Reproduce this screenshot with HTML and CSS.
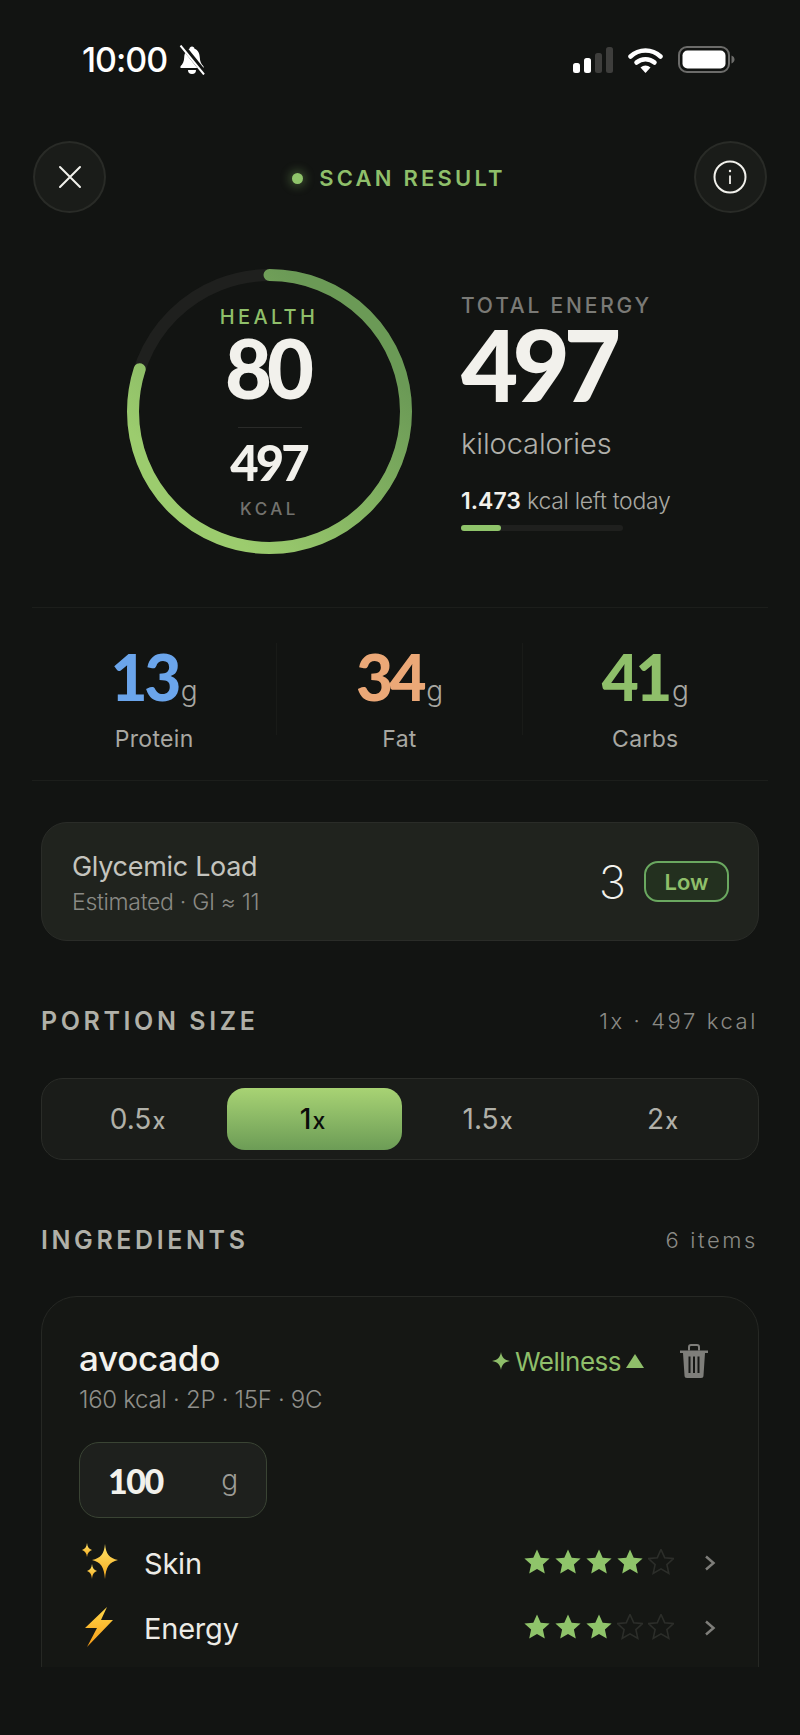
FILE: index.html
```html
<!DOCTYPE html>
<html lang="en">
<head>
    <meta charset="UTF-8">
    <meta name="viewport" content="width=device-width, initial-scale=1.0">
    <title>Scan result</title>
    <link rel="stylesheet" href="styles.css">
</head>
<body>
    <div class="page">
        <div class="status">
            <div class="status-left">
                <span class="time">10:00</span>
                <svg class="bell" width="30" height="30" viewBox="0 0 30 30">
                    <path d="M15 1.500c-1.500 0-2.300 1-2.500 2.200C9 4.800 7.400 8.400 7.200 12.500c-.2 4-1.300 6.500-3.700 8.700V23h23v-1.800c-2.400-2.200-3.500-4.700-3.700-8.700-.2-4.100-1.800-7.700-5.300-8.800C17.300 2.500 16.500 1.500 15 1.500z" fill="#fff"/>
                    <path d="M11 25a4 4 0 0 0 8 0z" fill="#fff"/>
                    <path d="M5 0 L28 28.500" stroke="#121412" stroke-width="5"/>
                    <path d="M3.500 .5 L27 29.500" stroke="#fff" stroke-width="2"/>
                </svg>
            </div>
            <div class="status-right">
                <svg width="40" height="26" viewBox="0 0 40 26">
                    <rect x="0" y="16" width="7" height="10" rx="2.500" fill="#fff"/>
                    <rect x="11" y="11" width="7" height="15" rx="2.500" fill="#fff"/>
                    <rect x="22" y="6" width="7" height="20" rx="2.500" fill="#3e3e3c"/>
                    <rect x="33" y="0" width="7" height="26" rx="2.500" fill="#3e3e3c"/>
                </svg>
                <svg width="35" height="26" viewBox="0 0 35 26">
                    <path d="M2.500 9.500C11 1.500 24 1.500 32.500 9.500" fill="none" stroke="#fff" stroke-width="4.500" stroke-linecap="round"/>
                    <path d="M8.500 15.500C13.500 11 21.500 11 26.500 15.500" fill="none" stroke="#fff" stroke-width="4.500" stroke-linecap="round"/>
                    <path d="M12.500 20.500C15.500 17.800 19.500 17.800 22.500 20.500L17.500 26z" fill="#fff"/>
                </svg>
                <svg width="57" height="27" viewBox="0 0 57 27">
                    <rect x="1" y="1" width="50" height="25" rx="8" fill="none" stroke="#6c6c6a" stroke-width="2"/>
                    <rect x="4.500" y="4.500" width="43" height="18" rx="5" fill="#fff"/>
                    <path d="M53.500 9.500c2 .8 3 2.200 3 4s-1 3.200-3 4z" fill="#6c6c6a"/>
                </svg>
            </div>
        </div>

        <div class="top">
            <button class="round-btn">
                <svg width="24" height="24" viewBox="0 0 24 24"><path d="M2 2 L22 22 M22 2 L2 22" stroke="#f2f1ec" stroke-width="2" stroke-linecap="round"/></svg>
            </button>
            <div class="scan-title"><span class="dot"></span>SCAN RESULT</div>
            <button class="round-btn">
                <svg width="34" height="34" viewBox="0 0 34 34">
                    <circle cx="17" cy="17" r="15.500" fill="none" stroke="#f2f1ec" stroke-width="2"/>
                    <path d="M17 15.500 V24" stroke="#f2f1ec" stroke-width="1.800"/>
                    <circle cx="17" cy="11" r="1.200" fill="#f2f1ec"/>
                </svg>
            </button>
        </div>

        <div class="hero">
            <div class="ring">
                <svg width="285" height="285" viewBox="0 0 285 285">
                    <defs>
                        <linearGradient id="ringGrad" gradientUnits="userSpaceOnUse" x1="220" y1="60" x2="60" y2="220" gradientTransform="rotate(90 142.500 142.500)">
                            <stop offset="0" stop-color="#6b9a56"/>
                            <stop offset="1" stop-color="#9ccc6e"/>
                        </linearGradient>
                    </defs>
                    <circle cx="142.500" cy="142.500" r="136.500" fill="none" stroke="#1f201e" stroke-width="12"/>
                    <circle cx="142.500" cy="142.500" r="136.500" fill="none" stroke="url(#ringGrad)" stroke-width="12" stroke-linecap="round" stroke-dasharray="686 858" transform="rotate(-90 142.500 142.500)"/>
                </svg>
                <div class="ring-inner">
                    <div class="ring-label">HEALTH</div>
                    <div class="ring-score">80</div>
                    <div class="ring-line"></div>
                    <div class="ring-kcal">497</div>
                    <div class="ring-unit">KCAL</div>
                </div>
            </div>
            <div class="energy">
                <div class="energy-label">TOTAL ENERGY</div>
                <div class="energy-num">497</div>
                <div class="energy-unit">kilocalories</div>
                <div class="energy-left"><b>1.473</b> kcal left today</div>
                <div class="energy-bar"><div class="energy-fill"></div></div>
            </div>
        </div>

        <div class="macros">
            <div class="macro">
                <div class="macro-num"><span class="blue">13</span><small>g</small></div>
                <div class="macro-name">Protein</div>
            </div>
            <div class="macro">
                <div class="macro-num"><span class="orange">34</span><small>g</small></div>
                <div class="macro-name">Fat</div>
            </div>
            <div class="macro">
                <div class="macro-num"><span class="green">41</span><small>g</small></div>
                <div class="macro-name">Carbs</div>
            </div>
        </div>

        <div class="gl-card">
            <div class="gl-text">
                <div class="gl-title">Glycemic Load</div>
                <div class="gl-sub">Estimated · GI ≈ 11</div>
            </div>
            <div class="gl-value">
                <span class="gl-num">3</span>
                <span class="gl-pill">Low</span>
            </div>
        </div>

        <div class="section-head portion-head">
            <h2>PORTION SIZE</h2>
            <span>1x · 497 kcal</span>
        </div>

        <div class="segments">
            <div class="segment">0.5<small>x</small></div>
            <div class="segment active">1<small>x</small></div>
            <div class="segment">1.5<small>x</small></div>
            <div class="segment">2<small>x</small></div>
        </div>

        <div class="section-head ingredients-head">
            <h2>INGREDIENTS</h2>
            <span>6 items</span>
        </div>

        <div class="ing-card">
            <div class="ing-top">
                <div>
                    <div class="ing-name">avocado</div>
                    <div class="ing-info">160 kcal · 2P · 15F · 9C</div>
                </div>
                <div class="ing-tag">
                    <svg width="18" height="18" viewBox="0 0 18 18"><path d="M9 0C9.800 5.500 12.500 8.200 18 9 12.500 9.800 9.800 12.500 9 18 8.200 12.500 5.500 9.800 0 9 5.500 8.200 8.200 5.500 9 0z" fill="#8fbf6a"/></svg>
                    <span>Wellness</span>
                    <svg width="18" height="14" viewBox="0 0 18 14"><path d="M9 0 L18 14 H0z" fill="#8fbf6a"/></svg>
                </div>
                <svg class="trash" width="28" height="34" viewBox="0 0 28 34">
                    <path d="M0 6.500h28v2.500H0z" fill="#7e7e7a"/>
                    <path d="M9 6.500V3a2 2 0 0 1 2-2h6a2 2 0 0 1 2 2v3.500" fill="none" stroke="#7e7e7a" stroke-width="2"/>
                    <path d="M3 9h22l-1.500 22.500a2.500 2.500 0 0 1-2.500 2.500H7a2.500 2.500 0 0 1-2.500-2.500z" fill="#7e7e7a"/>
                    <path d="M9.500 12.500V29M14 12.500V29M18.500 12.500V29" stroke="#151714" stroke-width="2"/>
                </svg>
            </div>
            <div class="amount"><span class="amount-num">100</span><span class="amount-unit">g</span></div>

            <div class="benefit">
                <svg class="benefit-icon" width="38" height="38" viewBox="0 0 38 38">
                    <defs>
                        <linearGradient id="sparkGrad" x1="0" y1="0" x2="0" y2="1">
                            <stop offset="0" stop-color="#ffe56a"/>
                            <stop offset="1" stop-color="#f5a81c"/>
                        </linearGradient>
                    </defs>
                    <path d="M24 1C25 11 28 15 37 17 28 19 25 24 24 36 23 24 20 19 11 17 20 15 23 11 24 1z" fill="url(#sparkGrad)"/>
                    <path d="M6 0C6.500 4 8 6 11 7 8 8 6.500 10 6 14 5.500 10 4 8 1 7 4 6 5.500 4 6 0z" fill="url(#sparkGrad)"/>
                    <path d="M11 21C11.500 25 13 27 16 28 13 29 11.500 31 11 36 10.500 31 9 29 6 28 9 27 10.500 25 11 21z" fill="url(#sparkGrad)"/>
                </svg>
                <span class="benefit-name">Skin</span>
                <span class="stars" data-score="4"></span>
                <svg class="chev" width="12" height="16" viewBox="0 0 12 16"><path d="M2 1.500 L9.500 8 L2 14.500" fill="none" stroke="#7e7e7a" stroke-width="2.500"/></svg>
            </div>
            <div class="benefit">
                <svg class="benefit-icon" width="38" height="40" viewBox="0 0 38 40">
                    <defs>
                        <linearGradient id="boltGrad" x1="0" y1="0" x2="0" y2="1">
                            <stop offset="0" stop-color="#ffd84a"/>
                            <stop offset="1" stop-color="#f59a16"/>
                        </linearGradient>
                    </defs>
                    <path d="M26 0 L4 21 H16 L6 40 L32 13 H20z" fill="url(#boltGrad)"/>
                </svg>
                <span class="benefit-name">Energy</span>
                <span class="stars" data-score="3"></span>
                <svg class="chev" width="12" height="16" viewBox="0 0 12 16"><path d="M2 1.500 L9.500 8 L2 14.500" fill="none" stroke="#7e7e7a" stroke-width="2.500"/></svg>
            </div>
        </div>
    </div>
    <script>
        const starPath = "M13 .5l3.700 8.200 8.900.9-6.700 6 1.900 8.800L13 19.900l-7.800 4.500 1.900-8.800-6.700-6 8.900-.9z";

        document.querySelectorAll('.stars').forEach(el => {
            const score = Number(el.dataset.score);
            let html = '';
            for (let i = 0; i < 5; i++) {
                const look = i < score ? 'fill="#8fc46a"' : 'fill="none" stroke="#2c2e2a" stroke-width="1.600"';
                html += `<svg width="26" height="26" viewBox="0 0 26 26"><path d="${starPath}" ${look}/></svg>`;
            }
            el.innerHTML = html;
        });
    </script>
</body>
</html>
```

FILE: styles.css
```css
* {
    box-sizing: border-box;
    margin: 0;
    padding: 0;
}
html, body {
    background: #121412;
    font-family: Inter, "Liberation Sans", sans-serif;
    color: #f2f1ec;
    width: 800px;
    height: 1735px;
    overflow: hidden;
}
.page {
    height: 1667px;
    overflow: hidden;
}
.status {
    height: 141px;
    padding: 45px 65px 0 82px;
    display: flex;
    justify-content: space-between;
    align-items: flex-start;
}
.status-left {
    display: flex;
    align-items: center;
    gap: 10px;
}
.time {
    font-size: 34px;
    font-weight: 500;
    line-height: 30px;
    letter-spacing: -1px;
    color: #fff;
}
.status-right {
    display: flex;
    align-items: center;
    gap: 15px;
    padding-top: 1px;
}
.top {
    height: 72px;
    margin: 0 33px;
    display: flex;
    justify-content: space-between;
    align-items: center;
}
.round-btn {
    width: 73px;
    height: 72px;
    border-radius: 50%;
    background: #1a1c19;
    border: 2px solid #292b27;
    display: flex;
    align-items: center;
    justify-content: center;
}
.scan-title {
    display: flex;
    align-items: center;
    gap: 16px;
    font-size: 22px;
    font-weight: 600;
    letter-spacing: 3.200px;
    color: #8fbf6a;
    padding-right: 2px;
    padding-top: 2px;
}
.dot {
    width: 11px;
    height: 11px;
    border-radius: 50%;
    background: #8fc46a;
    box-shadow: 0 0 10px 3px rgba(143, 196, 106, 0.3);
}
.hero {
    margin: 56px 0 0 127px;
    display: flex;
    gap: 49px;
    height: 285px;
}
.ring {
    position: relative;
    width: 285px;
    height: 285px;
}
.ring-inner {
    position: absolute;
    inset: 0;
    padding-top: 36px;
    display: flex;
    flex-direction: column;
    align-items: center;
}
.ring-label {
    font-size: 20px;
    font-weight: 500;
    line-height: 24px;
    letter-spacing: 3.300px;
    color: #8fbf6a;
    margin-right: 1px;
}
.ring-score {
    font-family: Lato, Inter, sans-serif;
    font-size: 81px;
    font-weight: 900;
    line-height: 80px;
    letter-spacing: -5px;
    margin-right: 5px;
    margin-top: -1px;
}
.ring-line {
    width: 64px;
    height: 1px;
    background: #2a2b29;
    margin-top: 19px;
}
.ring-kcal {
    font-family: Lato, Inter, sans-serif;
    font-size: 49px;
    font-weight: 900;
    line-height: 50px;
    letter-spacing: -3px;
    margin-right: 2px;
    margin-top: 9px;
}
.ring-unit {
    font-size: 17px;
    font-weight: 500;
    line-height: 20px;
    letter-spacing: 3.500px;
    color: #72726e;
    margin-top: 12px;
}
.energy {
    padding-top: 24px;
}
.energy-label {
    font-size: 21px;
    font-weight: 500;
    line-height: 26px;
    letter-spacing: 2.800px;
    color: #7a7a76;
}
.energy-num {
    font-family: Lato, Inter, sans-serif;
    font-size: 99px;
    font-weight: 900;
    line-height: 90px;
    letter-spacing: -6px;
}
.energy-unit {
    font-size: 29px;
    line-height: 36px;
    font-weight: 300;
    letter-spacing: -0.100px;
    color: #b0b0aa;
    margin-top: 17px;
}
.energy-left {
    font-size: 23px;
    line-height: 28px;
    font-weight: 300;
    letter-spacing: -0.300px;
    color: #a8a8a2;
    margin-top: 25px;
}
.energy-left b {
    font-weight: 600;
    color: #f2f1ec;
    letter-spacing: 0;
}
.energy-bar {
    width: 162px;
    height: 6px;
    border-radius: 3px;
    background: #1f201e;
    margin-top: 10px;
}
.energy-fill {
    width: 40px;
    height: 6px;
    border-radius: 3px;
    background: #8fc46a;
}
.macros {
    margin: 53px 32px 0;
    height: 174px;
    border-top: 1px solid #1c1e1b;
    border-bottom: 1px solid #1c1e1b;
    display: grid;
    grid-template-columns: repeat(3, 1fr);
    align-items: start;
    padding-top: 35px;
}
.macro {
    text-align: center;
    height: 92px;
    border-right: 1px solid #191b18;
}
.macro:last-child {
    border-right: none;
}
.macro-num {
    font-family: Lato, Inter, sans-serif;
    font-size: 64px;
    font-weight: 900;
    line-height: 68px;
    letter-spacing: -3.500px;
}
.macro-num small {
    font-family: Inter, sans-serif;
    font-size: 28px;
    font-weight: 300;
    letter-spacing: 0;
    color: #a8a8a2;
    margin-left: 3px;
}
.macro-name {
    font-size: 23px;
    font-weight: 400;
    line-height: 28px;
    letter-spacing: 0.300px;
    color: #a8a8a2;
}
.blue { color: #6ba5eb; }
.orange { color: #eba877; }
.green { color: #8fbf6a; }
.gl-card {
    margin: 41px 41px 0;
    height: 119px;
    background: #20231e;
    border: 1.500px solid #2a2c28;
    border-radius: 26px;
    padding: 0 29px 0 30px;
    display: flex;
    justify-content: space-between;
    align-items: center;
}
.gl-text {
    padding-top: 4px;
}
.gl-title {
    font-size: 27px;
    font-weight: 400;
    line-height: 32px;
    letter-spacing: -0.300px;
    color: #c4c4be;
}
.gl-sub {
    font-size: 23px;
    font-weight: 300;
    line-height: 28px;
    letter-spacing: -0.300px;
    color: #8a8a85;
    margin-top: 5px;
}
.gl-value {
    display: flex;
    align-items: center;
    gap: 18px;
}
.gl-num {
    font-size: 46px;
    font-weight: 200;
    line-height: 50px;
}
.gl-pill {
    width: 85px;
    height: 41px;
    border: 2px solid #6aa860;
    border-radius: 14px;
    background: #23301f;
    color: #8fbf6a;
    font-size: 22px;
    font-weight: 600;
    display: flex;
    align-items: center;
    justify-content: center;
}
.section-head {
    margin: 0 41px;
    display: flex;
    justify-content: space-between;
    align-items: center;
    height: 30px;
}
.section-head h2 {
    font-size: 25px;
    font-weight: 600;
    letter-spacing: 3.600px;
    color: #b0b0a8;
}
.section-head span {
    font-size: 22px;
    font-weight: 300;
    letter-spacing: 2.600px;
    color: #8a8a85;
    margin-right: 1px;
}
.portion-head {
    margin-top: 65px;
}
.ingredients-head {
    margin-top: 65px;
}
.segments {
    margin: 42px 41px 0;
    height: 82px;
    background: #1a1c19;
    border: 1.500px solid #2a2c28;
    border-radius: 22px;
    padding: 9px 6px 9px 10px;
    display: grid;
    grid-template-columns: repeat(4, 1fr);
}
.segment {
    display: flex;
    align-items: center;
    justify-content: center;
    padding-right: 4px;
    font-size: 28px;
    font-weight: 400;
    color: #b0b0a8;
    border-radius: 18px;
}
.segment small {
    font-size: 23px;
    font-weight: 500;
    margin-left: 1px;
    margin-top: 3px;
}
.segment.active {
    background: linear-gradient(#a8d374, #6c9c56);
    color: #0b0c0a;
    font-weight: 500;
}
.ing-card {
    margin: 41px 41px 0;
    height: 500px;
    background: #151714;
    border: 1.500px solid #262824;
    border-radius: 36px;
    padding: 42px 37px 0;
}
.ing-top {
    display: flex;
    align-items: flex-start;
}
.ing-name {
    font-size: 35px;
    font-weight: 500;
    line-height: 38px;
    letter-spacing: -0.300px;
}
.ing-info {
    font-size: 24px;
    font-weight: 300;
    line-height: 30px;
    letter-spacing: -0.300px;
    color: #8f8f8a;
    margin-top: 8px;
}
.ing-tag {
    margin-left: auto;
    display: flex;
    align-items: center;
    gap: 5px;
    font-size: 26px;
    font-weight: 400;
    letter-spacing: -0.500px;
    color: #8fbf6a;
    height: 34px;
    margin-top: 5px;
}
.trash {
    margin: 5px 13px 0 36px;
}
.amount {
    margin-top: 27px;
    width: 188px;
    height: 76px;
    border: 1.500px solid #3a4434;
    border-radius: 20px;
    background: #1e201d;
    padding: 0 28px;
    display: flex;
    align-items: center;
    justify-content: space-between;
}
.amount-num {
    font-family: Lato, Inter, sans-serif;
    font-size: 34px;
    font-weight: 900;
    letter-spacing: -1.500px;
}
.amount-unit {
    font-size: 28px;
    font-weight: 300;
    color: #9c9c96;
}
.benefit {
    height: 65px;
    display: flex;
    align-items: center;
}
.amount + .benefit {
    margin-top: 11px;
}
.benefit-icon {
    margin-left: 2px;
    width: 38px;
}
.benefit-name {
    margin: 3px 0 0 25px;
    font-size: 29px;
    font-weight: 400;
    letter-spacing: -0.200px;
    color: #ecebe6;
}
.stars {
    margin-left: auto;
    display: flex;
    gap: 5px;
}
.chev {
    margin: 2px 5px 0 30px;
}
```
